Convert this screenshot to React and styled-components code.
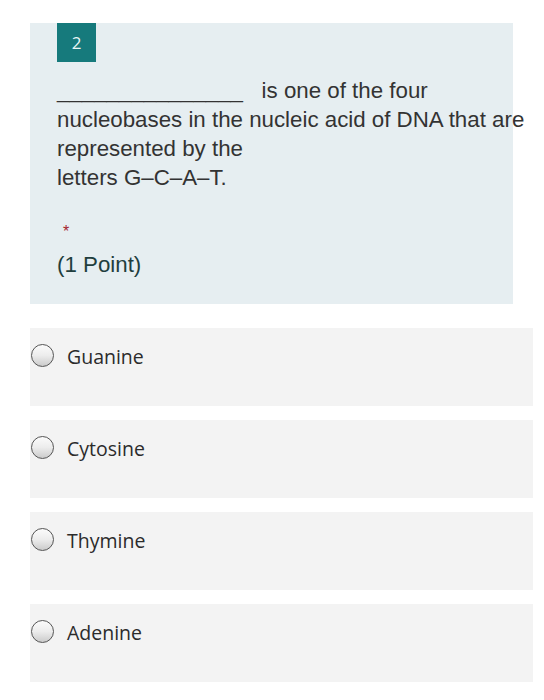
import React from "react";
import styled, { createGlobalStyle } from "styled-components";

const Global = createGlobalStyle`
  html, body { margin: 0; padding: 0; background: #ffffff; }
  body { width: 544px; height: 700px; overflow: hidden; }
`;

const Page = styled.div`
  padding: 23px 11px 0 30px;
  display: flex;
  flex-direction: column;
`;

const QuestionCard = styled.section`
  width: 483px;
  box-sizing: border-box;
  background: #e6eef1;
  padding: 0 0 25px 27px;
  display: flex;
  flex-direction: column;
  align-items: flex-start;
`;

const Badge = styled.div`
  width: 39px;
  height: 39px;
  background: #167a7c;
  color: #eaf6f6;
  font-family: "Open Sans", "Noto Sans", sans-serif;
  font-size: 17px;
  display: flex;
  align-items: center;
  justify-content: center;
`;

const QuestionText = styled.p`
  margin: 14px 0 0 0;
  width: 500px;
  font-family: "Liberation Sans", Arial, sans-serif;
  font-size: 22.3px;
  line-height: 29px;
  color: #333333;
`;

const Required = styled.div`
  margin: 31px 0 0 0;
  padding-left: 6px;
  font-family: "Liberation Sans", Arial, sans-serif;
  font-size: 16px;
  line-height: 17px;
  color: #a4262c;
`;

const Points = styled.div`
  margin-top: 10px;
  font-family: "Liberation Sans", Arial, sans-serif;
  font-size: 22.3px;
  line-height: 29px;
  color: #1f3e3e;
`;

const Options = styled.div`
  margin-top: 24px;
  display: flex;
  flex-direction: column;
  gap: 14px;
`;

const Option = styled.label`
  height: 78px;
  box-sizing: border-box;
  background: #f3f3f3;
  padding: 16px 0 0 1px;
  display: flex;
  align-items: flex-start;
  gap: 13px;
`;

const Radio = styled.span`
  width: 21px;
  height: 21px;
  border-radius: 50%;
  border: 1px solid #555555;
  background: linear-gradient(180deg, #fbfbfb 0%, #ececec 50%, #cbcbcb 100%);
  flex: none;
`;

const OptionLabel = styled.span`
  font-family: "Open Sans", "Noto Sans", sans-serif;
  font-size: 19.5px;
  line-height: 26px;
  color: #2b2b2b;
  margin-top: 0px;
`;

const choices = ["Guanine", "Cytosine", "Thymine", "Adenine"];

export default function App() {
  return (
    <>
      <Global />
      <Page>
        <QuestionCard>
          <Badge>2</Badge>
          <QuestionText>
            _______________{"\u00a0\u00a0\u00a0"}is one of the four nucleobases in the nucleic
            acid of DNA that are
            <br />
            represented by the
            <br />
            letters G–C–A–T.
          </QuestionText>
          <Required>*</Required>
          <Points>(1 Point)</Points>
        </QuestionCard>
        <Options>
          {choices.map((c) => (
            <Option key={c}>
              <Radio />
              <OptionLabel>{c}</OptionLabel>
            </Option>
          ))}
        </Options>
      </Page>
    </>
  );
}
